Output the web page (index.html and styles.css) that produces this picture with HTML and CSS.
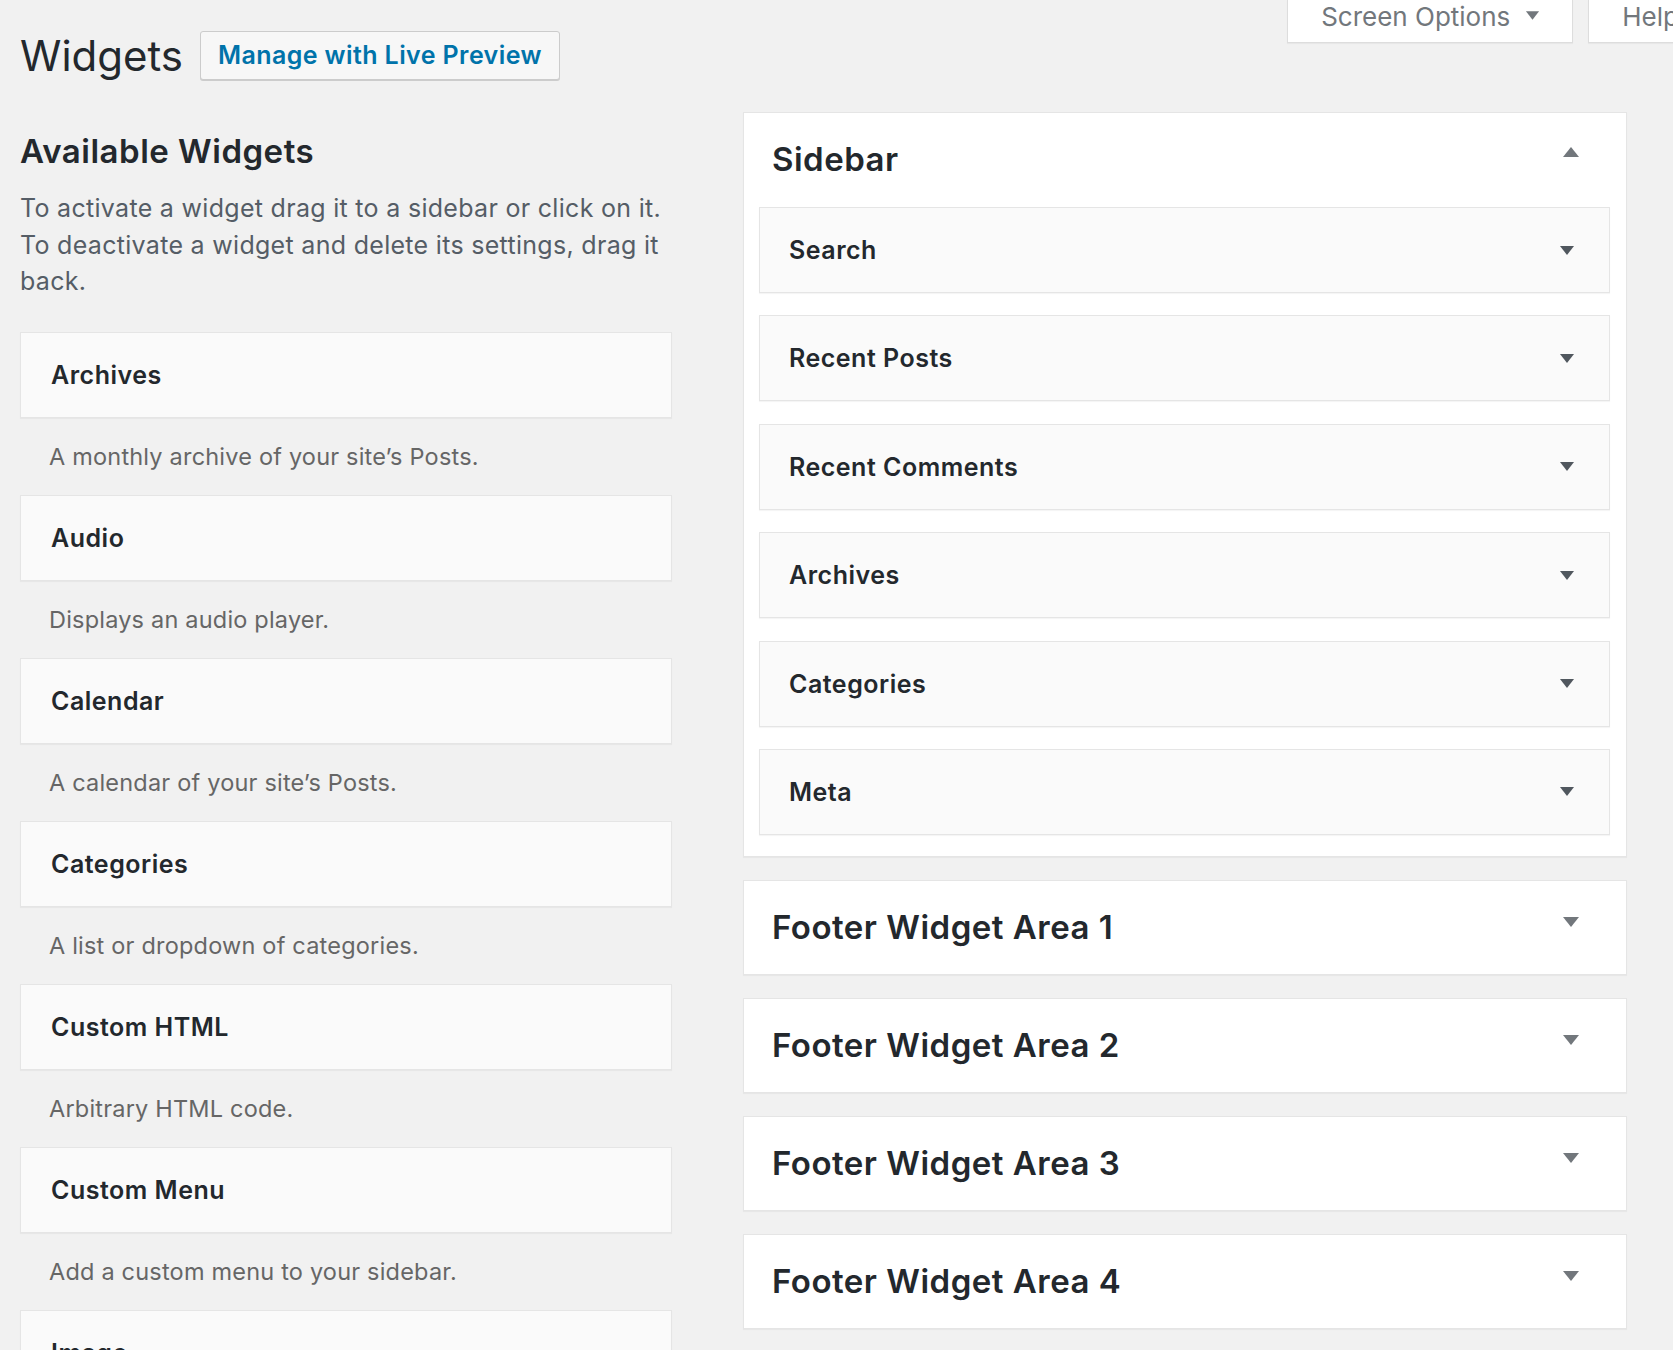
FILE: index.html
```html
<!DOCTYPE html>
<html lang="en">
<head>
<meta charset="utf-8">
<title>Widgets</title>
<link rel="stylesheet" href="styles.css">
</head>
<body>
<header class="topbar">
  <div class="title-row">
    <h1 class="page-title">Widgets</h1>
    <a class="page-title-action" href="#">Manage with Live Preview</a>
  </div>
  <div class="screen-meta-links">
    <button class="meta-tab">Screen Options
      <svg class="meta-arrow" viewBox="0 0 16 11" aria-hidden="true"><path d="M1 1 H15 L8 10 Z"/></svg>
    </button>
    <button class="meta-tab">Help
      <svg class="meta-arrow" viewBox="0 0 16 11" aria-hidden="true"><path d="M1 1 H15 L8 10 Z"/></svg>
    </button>
  </div>
</header>

<main class="widgets-layout">
  <section class="available">
    <h2 class="section-title">Available Widgets</h2>
    <p class="intro">To activate a widget drag it to a sidebar or click on it. To deactivate a widget and delete its settings, drag it back.</p>
    <ul class="widget-list">
      <li><div class="widget-card">Archives</div><p class="widget-desc">A monthly archive of your site’s Posts.</p></li>
      <li><div class="widget-card">Audio</div><p class="widget-desc">Displays an audio player.</p></li>
      <li><div class="widget-card">Calendar</div><p class="widget-desc">A calendar of your site’s Posts.</p></li>
      <li><div class="widget-card">Categories</div><p class="widget-desc">A list or dropdown of categories.</p></li>
      <li><div class="widget-card">Custom HTML</div><p class="widget-desc">Arbitrary HTML code.</p></li>
      <li><div class="widget-card">Custom Menu</div><p class="widget-desc">Add a custom menu to your sidebar.</p></li>
      <li><div class="widget-card">Image</div><p class="widget-desc">Displays an image.</p></li>
    </ul>
  </section>

  <section class="sidebars">
    <div class="sidebar-panel">
      <div class="panel-head">
        <h2 class="panel-title">Sidebar</h2>
        <svg class="panel-toggle up" viewBox="0 0 18 12" aria-hidden="true"><path d="M9 1 L17 11 H1 Z"/></svg>
      </div>
      <div class="panel-body">
        <div class="sb-widget"><span>Search</span><svg class="sb-arrow" viewBox="0 0 16 11" aria-hidden="true"><path d="M1 1 H15 L8 10 Z"/></svg></div>
        <div class="sb-widget"><span>Recent Posts</span><svg class="sb-arrow" viewBox="0 0 16 11" aria-hidden="true"><path d="M1 1 H15 L8 10 Z"/></svg></div>
        <div class="sb-widget"><span>Recent Comments</span><svg class="sb-arrow" viewBox="0 0 16 11" aria-hidden="true"><path d="M1 1 H15 L8 10 Z"/></svg></div>
        <div class="sb-widget"><span>Archives</span><svg class="sb-arrow" viewBox="0 0 16 11" aria-hidden="true"><path d="M1 1 H15 L8 10 Z"/></svg></div>
        <div class="sb-widget"><span>Categories</span><svg class="sb-arrow" viewBox="0 0 16 11" aria-hidden="true"><path d="M1 1 H15 L8 10 Z"/></svg></div>
        <div class="sb-widget"><span>Meta</span><svg class="sb-arrow" viewBox="0 0 16 11" aria-hidden="true"><path d="M1 1 H15 L8 10 Z"/></svg></div>
      </div>
    </div>
    <div class="sidebar-panel">
      <div class="panel-head">
        <h2 class="panel-title">Footer Widget Area 1</h2>
        <svg class="panel-toggle" viewBox="0 0 18 12" aria-hidden="true"><path d="M1 1 H17 L9 11 Z"/></svg>
      </div>
    </div>
    <div class="sidebar-panel">
      <div class="panel-head">
        <h2 class="panel-title">Footer Widget Area 2</h2>
        <svg class="panel-toggle" viewBox="0 0 18 12" aria-hidden="true"><path d="M1 1 H17 L9 11 Z"/></svg>
      </div>
    </div>
    <div class="sidebar-panel">
      <div class="panel-head">
        <h2 class="panel-title">Footer Widget Area 3</h2>
        <svg class="panel-toggle" viewBox="0 0 18 12" aria-hidden="true"><path d="M1 1 H17 L9 11 Z"/></svg>
      </div>
    </div>
    <div class="sidebar-panel">
      <div class="panel-head">
        <h2 class="panel-title">Footer Widget Area 4</h2>
        <svg class="panel-toggle" viewBox="0 0 18 12" aria-hidden="true"><path d="M1 1 H17 L9 11 Z"/></svg>
      </div>
    </div>
  </section>
</main>
</body>
</html>
```

FILE: styles.css
```css
html, body {
  margin: 0;
  padding: 0;
}

body {
  background: #f1f1f1;
  color: #23282d;
  font-family: Inter, "Noto Sans", "Liberation Sans", sans-serif;
  overflow: hidden;
  height: 1350px;
}

/* ---------- top bar ---------- */
.topbar {
  display: flex;
  justify-content: space-between;
  align-items: flex-start;
  padding-left: 20px;
}

.title-row {
  display: flex;
  align-items: center;
  gap: 17px;
  margin-top: 31px;
  height: 49px;
}

.page-title {
  margin: 0;
  font-size: 42px;
  font-weight: 400;
  line-height: 49px;
  color: #23282d;
}

.page-title-action {
  box-sizing: border-box;
  height: 49px;
  padding: 0 17px;
  border: 1px solid #ccc;
  border-radius: 3px;
  background: #f7f7f7;
  box-shadow: 0 1px 0 #ccc;
  color: #0073aa;
  font-size: 25px;
  font-weight: 600;
  letter-spacing: 0.4px;
  line-height: 47px;
  text-decoration: none;
  white-space: nowrap;
}

.screen-meta-links {
  display: flex;
  gap: 15px;
  margin-right: -69px;
}

.meta-tab {
  display: flex;
  align-items: center;
  gap: 15px;
  font-family: inherit;
  font-size: 26px;
  line-height: 34px;
  color: #72777c;
  background: #fff;
  border: 1px solid #ddd;
  border-top: none;
  padding: 0 32px 8px 33px;
  box-shadow: 0 1px 1px rgba(0, 0, 0, 0.04);
  cursor: pointer;
}

.meta-arrow {
  width: 15px;
  height: 11px;
  fill: #72777c;
  margin-top: -3px;
}

/* ---------- layout ---------- */
.widgets-layout {
  display: grid;
  grid-template-columns: 652px 884px;
  column-gap: 71px;
  align-items: start;
  padding-left: 20px;
  margin-top: 32px;
}

/* ---------- available widgets ---------- */
.available {
  padding-top: 19px;
}

.section-title {
  margin: 0;
  font-size: 33px;
  font-weight: 600;
  letter-spacing: 0.5px;
  line-height: 40px;
  color: #23282d;
}

.intro {
  margin: 19px 0 32px;
  font-size: 25px;
  letter-spacing: 0.3px;
  line-height: 36.7px;
  color: #555d66;
}

.widget-list {
  list-style: none;
  margin: 0;
  padding: 0;
}

.widget-card {
  box-sizing: border-box;
  height: 86px;
  padding: 0 30px;
  border: 1px solid #e5e5e5;
  background: #fafafa;
  box-shadow: 0 1px 1px rgba(0, 0, 0, 0.04);
  font-size: 25px;
  font-weight: 600;
  letter-spacing: 0.5px;
  line-height: 84px;
  color: #23282d;
}

.widget-desc {
  margin: 0;
  height: 77px;
  padding-left: 29px;
  font-size: 23.5px;
  letter-spacing: 0.2px;
  line-height: 77px;
  color: #666;
}

/* ---------- sidebars ---------- */
.sidebars {
  display: flex;
  flex-direction: column;
  gap: 23px;
}

.sidebar-panel {
  background: #fff;
  border: 1px solid #e5e5e5;
  box-shadow: 0 1px 1px rgba(0, 0, 0, 0.04);
}

.panel-head {
  display: flex;
  justify-content: space-between;
  align-items: flex-start;
  height: 93px;
  padding: 0 46px 0 28px;
}

.panel-title {
  margin: 0;
  font-size: 33px;
  font-weight: 600;
  letter-spacing: 0.5px;
  line-height: 93px;
  color: #23282d;
}

.panel-toggle {
  width: 18px;
  height: 12px;
  margin-top: 35px;
  fill: #72777c;
}

.panel-toggle.up {
  margin-top: 33px;
}

.panel-body {
  display: flex;
  flex-direction: column;
  gap: 22.4px;
  padding: 1px 16px 21px 15px;
}

.sb-widget {
  box-sizing: border-box;
  display: flex;
  align-items: center;
  justify-content: space-between;
  height: 86px;
  padding: 0 34px 0 29px;
  border: 1px solid #e5e5e5;
  background: #fafafa;
  box-shadow: 0 1px 1px rgba(0, 0, 0, 0.04);
  font-size: 25px;
  font-weight: 600;
  letter-spacing: 0.5px;
  color: #23282d;
}

.sb-arrow {
  width: 16px;
  height: 11px;
  fill: #50575e;
}
```
